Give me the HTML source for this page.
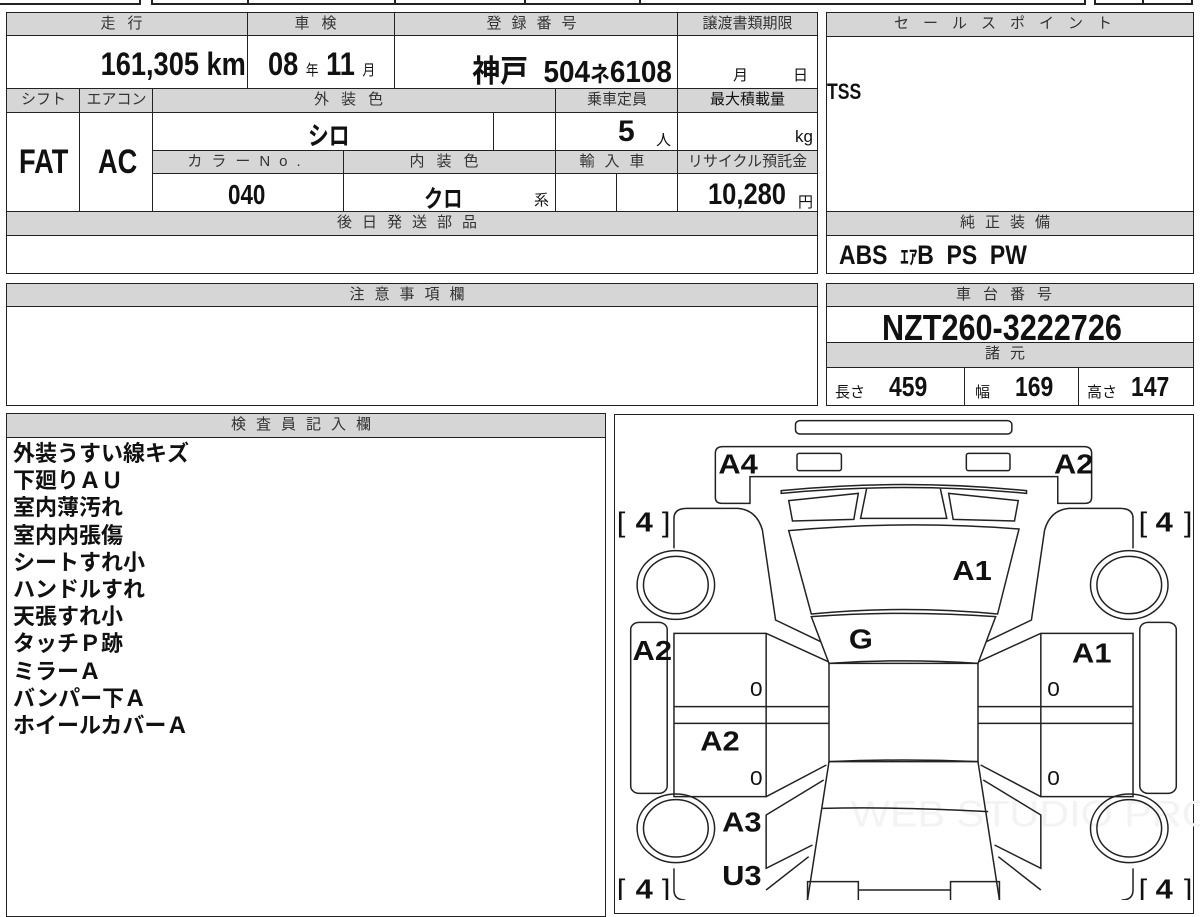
<!DOCTYPE html>
<html><head><meta charset="utf-8">
<style>
*{margin:0;padding:0;box-sizing:border-box}
body{width:1200px;height:900px;background:#fff;position:relative;overflow:hidden;font-family:"Liberation Sans Narrow","Liberation Sans","Noto Sans CJK JP",sans-serif;color:#111}
.c{position:absolute;border:1.5px solid #222;background:#fff;overflow:hidden;white-space:nowrap}
.h{background:#d6d6d6;color:#333;font-size:15px;text-align:center;line-height:21px;letter-spacing:8px;font-family:"Liberation Sans","Noto Sans CJK JP",sans-serif}
.b{position:absolute;font-weight:bold;white-space:nowrap}
.jp{font-family:"Liberation Sans","Noto Sans CJK JP",sans-serif}
</style></head><body>
<div class="c" style="left:-5px;top:-20px;width:146px;height:25px;border-width:2px"></div>
<div class="c" style="left:151px;top:-20px;width:98px;height:25px;border-width:2px"></div>
<div class="c" style="left:247px;top:-20px;width:149px;height:25px;border-width:2px"></div>
<div class="c" style="left:394px;top:-20px;width:132px;height:25px;border-width:2px"></div>
<div class="c" style="left:524px;top:-20px;width:117px;height:25px;border-width:2px"></div>
<div class="c" style="left:639px;top:-20px;width:447px;height:25px;border-width:2px"></div>
<div class="c" style="left:1094px;top:-20px;width:50px;height:25px;border-width:2px"></div>
<div class="c" style="left:1142px;top:-20px;width:51px;height:25px;border-width:2px"></div>

<div class="c h" style="left:6px;top:12px;width:243px;height:25px;letter-spacing:12px">走行</div>
<div class="c h" style="left:247px;top:12px;width:149px;height:25px;letter-spacing:12px">車検</div>
<div class="c h" style="left:394px;top:12px;width:285px;height:25px;letter-spacing:10px">登録番号</div>
<div class="c h" style="left:677px;top:12px;width:141px;height:25px;letter-spacing:0">譲渡書類期限</div>

<div class="c" style="left:6px;top:35px;width:243px;height:55px"><span class="b" style="right:2px;top:10px;font-size:32px;transform:scaleX(0.85);transform-origin:right">161,305 km</span></div>
<div class="c" style="left:247px;top:35px;width:149px;height:55px"><span class="b" style="left:20px;top:10px;font-size:32px;transform:scaleX(0.85);transform-origin:left">08 <span class="jp" style="font-size:15px;font-weight:normal">年</span> 11 <span class="jp" style="font-size:15px;font-weight:normal">月</span></span></div>
<div class="c" style="left:394px;top:35px;width:285px;height:55px"><span class="b" style="right:6px;top:10px;font-size:31px;transform:scaleX(0.9);transform-origin:right"><span class="jp">神戸</span>&nbsp; 504<span class="jp" style="font-size:22px">ネ</span>6108</span></div>
<div class="c jp" style="left:677px;top:35px;width:141px;height:55px"><span style="position:absolute;left:55px;top:28px;font-size:15px">月</span><span style="position:absolute;left:115px;top:28px;font-size:15px">日</span></div>

<div class="c h" style="left:6px;top:88px;width:75px;height:26px;letter-spacing:0">シフト</div>
<div class="c h" style="left:79px;top:88px;width:75px;height:26px;letter-spacing:0">エアコン</div>
<div class="c h" style="left:152px;top:88px;width:405px;height:26px;letter-spacing:12px">外装色</div>
<div class="c h" style="left:555px;top:88px;width:124px;height:26px;letter-spacing:0">乗車定員</div>
<div class="c h" style="left:677px;top:88px;width:141px;height:26px;letter-spacing:0;color:#111">最大積載量</div>

<div class="c" style="left:6px;top:112px;width:75px;height:101px"><span class="b" style="left:12px;top:30px;font-size:34px;transform:scaleX(0.8);transform-origin:left">FAT</span></div>
<div class="c" style="left:79px;top:112px;width:75px;height:101px"><span class="b" style="left:18px;top:30px;font-size:34px;transform:scaleX(0.8);transform-origin:left">AC</span></div>
<div class="c" style="left:152px;top:112px;width:343px;height:40px"><span class="b jp" style="left:155px;top:3px;font-size:26px;transform:scaleX(0.8);transform-origin:left">シロ</span></div>
<div class="c" style="left:493px;top:112px;width:64px;height:40px"></div>
<div class="c" style="left:555px;top:112px;width:124px;height:40px"><span class="b" style="left:62px;top:2px;font-size:30px">5</span><span class="jp" style="position:absolute;left:100px;top:16px;font-size:15px">人</span></div>
<div class="c" style="left:677px;top:112px;width:141px;height:40px"><span style="position:absolute;right:4px;top:14px;font-size:17px">kg</span></div>

<div class="c h" style="left:152px;top:150px;width:193px;height:25px;letter-spacing:9px">カラーNo.</div>
<div class="c h" style="left:343px;top:150px;width:214px;height:25px;letter-spacing:12px">内装色</div>
<div class="c h" style="left:555px;top:150px;width:124px;height:25px;letter-spacing:10px">輸入車</div>
<div class="c h" style="left:677px;top:150px;width:141px;height:25px;letter-spacing:0">リサイクル預託金</div>

<div class="c" style="left:152px;top:173px;width:193px;height:40px"><span class="b" style="left:75px;top:5px;font-size:28px;transform:scaleX(0.8);transform-origin:left">040</span></div>
<div class="c" style="left:343px;top:173px;width:214px;height:40px"><span class="b jp" style="left:80px;top:5px;font-size:24px;transform:scaleX(0.8);transform-origin:left">クロ</span><span class="jp" style="position:absolute;left:190px;top:15px;font-size:15px">系</span></div>
<div class="c" style="left:555px;top:173px;width:63px;height:40px"></div>
<div class="c" style="left:616px;top:173px;width:63px;height:40px"></div>
<div class="c" style="left:677px;top:173px;width:141px;height:40px"><span class="b" style="left:30px;top:4px;font-size:30px;transform:scaleX(0.85);transform-origin:left">10,280</span><span class="jp" style="position:absolute;right:4px;top:17px;font-size:15px">円</span></div>

<div class="c h" style="left:6px;top:211px;width:812px;height:26px;letter-spacing:10px">後日発送部品</div>
<div class="c" style="left:6px;top:235px;width:812px;height:39px"></div>

<div class="c h" style="left:826px;top:12px;width:368px;height:26px;letter-spacing:14px">セールスポイント</div>
<div class="c" style="left:826px;top:36px;width:368px;height:177px"><span class="b" style="left:0px;top:42px;font-size:22px;transform:scaleX(0.8);transform-origin:left">TSS</span></div>
<div class="c h" style="left:826px;top:211px;width:368px;height:26px;letter-spacing:10px">純正装備</div>
<div class="c" style="left:826px;top:235px;width:368px;height:39px"><span class="b" style="left:12px;top:4px;font-size:27px;transform:scaleX(0.85);transform-origin:left">ABS&nbsp; <span class="jp" style="font-size:20px">ｴｱ</span>B&nbsp; PS&nbsp; PW</span></div>

<div class="c h" style="left:6px;top:283px;width:812px;height:25px;letter-spacing:10px">注意事項欄</div>
<div class="c" style="left:6px;top:306px;width:812px;height:100px"></div>

<div class="c h" style="left:826px;top:283px;width:368px;height:25px;letter-spacing:12px">車台番号</div>
<div class="c" style="left:826px;top:306px;width:368px;height:38px"><span class="b" style="left:55px;top:0px;font-size:36px;transform:scaleX(0.85);transform-origin:left">NZT260-3222726</span></div>
<div class="c h" style="left:826px;top:342px;width:368px;height:27px;letter-spacing:10px">諸元</div>
<div class="c" style="left:826px;top:367px;width:140px;height:39px"><span class="jp" style="position:absolute;left:8px;top:13px;font-size:15px">長さ</span><span class="b" style="left:62px;top:3px;font-size:28px;transform:scaleX(0.82);transform-origin:left">459</span></div>
<div class="c" style="left:964px;top:367px;width:116px;height:39px"><span class="jp" style="position:absolute;left:10px;top:13px;font-size:15px">幅</span><span class="b" style="left:50px;top:3px;font-size:28px;transform:scaleX(0.82);transform-origin:left">169</span></div>
<div class="c" style="left:1078px;top:367px;width:116px;height:39px"><span class="jp" style="position:absolute;left:8px;top:13px;font-size:15px">高さ</span><span class="b" style="left:52px;top:3px;font-size:28px;transform:scaleX(0.82);transform-origin:left">147</span></div>

<div class="c h" style="left:6px;top:413px;width:600px;height:26px;letter-spacing:10px">検査員記入欄</div>
<div class="c" style="left:6px;top:437px;width:600px;height:480px">
<div class="jp" style="position:absolute;left:6px;top:2px;font-size:22px;font-weight:bold;line-height:27.2px;white-space:pre">外装うすい線キズ
下廻りＡＵ
室内薄汚れ
室内内張傷
シートすれ小
ハンドルすれ
天張すれ小
タッチＰ跡
ミラーＡ
バンパー下Ａ
ホイールカバーＡ</div></div>

<div class="c" style="left:614px;top:414px;width:580px;height:500px"></div>
<svg style="position:absolute;left:610px;top:410px" width="590" height="490" viewBox="0 0 1568 1470" preserveAspectRatio="none">
<text x="640" y="1250" font-family="Liberation Sans Narrow, Liberation Sans, sans-serif" font-size="110" fill="#f3f3f3">WEB STUDIO PRO</text>
<g fill="none" stroke="#222" stroke-width="1.5">
<rect x="493" y="32" width="575" height="40" rx="12" vector-effect="non-scaling-stroke"/>
<path d="M300 110 L1260 110 Q1280 110 1280 130 L1280 262 Q1280 280 1262 280 L1190 280 L1190 200 L372 200 L372 280 L298 280 Q280 280 280 262 L280 130 Q280 110 300 110 Z" vector-effect="non-scaling-stroke"/>
<rect x="497" y="130" width="118" height="52" rx="6" vector-effect="non-scaling-stroke"/>
<rect x="947" y="130" width="116" height="52" rx="6" vector-effect="non-scaling-stroke"/>
<path d="M455 242 Q780 205 1107 242 L1107 250 Q780 215 455 250 Z" vector-effect="non-scaling-stroke"/>
<path d="M475 272 L660 250 L648 328 L485 333 Z" vector-effect="non-scaling-stroke"/>
<path d="M1085 272 L900 250 L912 328 L1075 333 Z" vector-effect="non-scaling-stroke"/>
<path d="M682 236 L666 325 L895 325 L878 236" vector-effect="non-scaling-stroke"/>
<path d="M475 362 Q780 330 1087 357 L1030 612 Q780 585 535 612 Z" vector-effect="non-scaling-stroke"/>
<path d="M535 620 Q780 600 1025 620 L978 760 Q780 745 582 760 Z" vector-effect="non-scaling-stroke"/>
<rect x="582" y="760" width="396" height="295" vector-effect="non-scaling-stroke"/>
<path d="M582 1055 Q780 1045 978 1055" vector-effect="non-scaling-stroke"/>
<path d="M582 1055 L525 1470 M978 1055 L1035 1470" vector-effect="non-scaling-stroke"/>
<path d="M565 1195 Q780 1190 1005 1205" vector-effect="non-scaling-stroke"/>
<path d="M525 1470 L525 1415 L660 1415 L660 1470 M660 1440 L905 1440 M905 1470 L905 1415 L1035 1415 L1035 1470" vector-effect="non-scaling-stroke"/>
<path d="M170 415 L170 325 Q170 295 205 295 L340 295 Q390 300 405 360 L440 630 L560 695" vector-effect="non-scaling-stroke"/>
<path d="M580 755 L415 670 L170 670 L170 1160 L415 1160 L415 670" vector-effect="non-scaling-stroke"/>
<path d="M170 890 L582 890 M170 940 L582 940" vector-effect="non-scaling-stroke"/>
<path d="M415 1160 L575 1065 M415 1215 L568 1110 L415 1215 L415 1375 L538 1305 M415 1440 L528 1340 M170 1375 L170 1440 Q170 1470 200 1470" vector-effect="non-scaling-stroke"/>
<rect x="55" y="637" width="97" height="513" rx="22" vector-effect="non-scaling-stroke"/>
<circle cx="175" cy="525" r="103" vector-effect="non-scaling-stroke"/><circle cx="175" cy="525" r="86" vector-effect="non-scaling-stroke"/>
<circle cx="175" cy="1255" r="103" vector-effect="non-scaling-stroke"/><circle cx="175" cy="1255" r="86" vector-effect="non-scaling-stroke"/>
<path d="M1390 415 L1390 325 Q1390 295 1355 295 L1220 295 Q1170 300 1155 360 L1120 630 L1000 695" vector-effect="non-scaling-stroke"/>
<path d="M980 755 L1145 670 L1390 670 L1390 1160 L1145 1160 L1145 670" vector-effect="non-scaling-stroke"/>
<path d="M1390 890 L978 890 M1390 940 L978 940" vector-effect="non-scaling-stroke"/>
<path d="M1145 1160 L985 1065 M1145 1215 L992 1110 L1145 1215 L1145 1375 L1022 1305 M1145 1440 L1032 1340 M1390 1375 L1390 1440 Q1390 1470 1360 1470" vector-effect="non-scaling-stroke"/>
<rect x="1408" y="637" width="97" height="513" rx="22" vector-effect="non-scaling-stroke"/>
<circle cx="1380" cy="525" r="103" vector-effect="non-scaling-stroke"/><circle cx="1380" cy="525" r="86" vector-effect="non-scaling-stroke"/>
<circle cx="1380" cy="1255" r="103" vector-effect="non-scaling-stroke"/><circle cx="1380" cy="1255" r="86" vector-effect="non-scaling-stroke"/>
</g>
<g font-family="Liberation Sans Narrow, Liberation Sans, sans-serif" font-weight="bold" font-size="82" fill="#111">
<text x="288" y="190">A4</text><text x="1180" y="190">A2</text>
<text x="910" y="510">A1</text><text x="60" y="750">A2</text>
<text x="635" y="715">G</text><text x="1228" y="757">A1</text>
<text x="240" y="1022">A2</text><text x="298" y="1265">A3</text><text x="298" y="1425">U3</text>
<text x="372" y="858" font-size="60" font-weight="normal">0</text><text x="372" y="1125" font-size="60" font-weight="normal">0</text>
<text x="1162" y="858" font-size="60" font-weight="normal">0</text><text x="1162" y="1125" font-size="60" font-weight="normal">0</text>
<text x="18" y="365" font-weight="normal">[</text><text x="68" y="365">4</text><text x="138" y="365" font-weight="normal">]</text>
<text x="1405" y="365" font-weight="normal">[</text><text x="1450" y="365">4</text><text x="1525" y="365" font-weight="normal">]</text>
<text x="18" y="1465" font-weight="normal">[</text><text x="68" y="1465">4</text><text x="138" y="1465" font-weight="normal">]</text>
<text x="1405" y="1465" font-weight="normal">[</text><text x="1450" y="1465">4</text><text x="1525" y="1465" font-weight="normal">]</text>
</g>
</svg>
</body></html>
